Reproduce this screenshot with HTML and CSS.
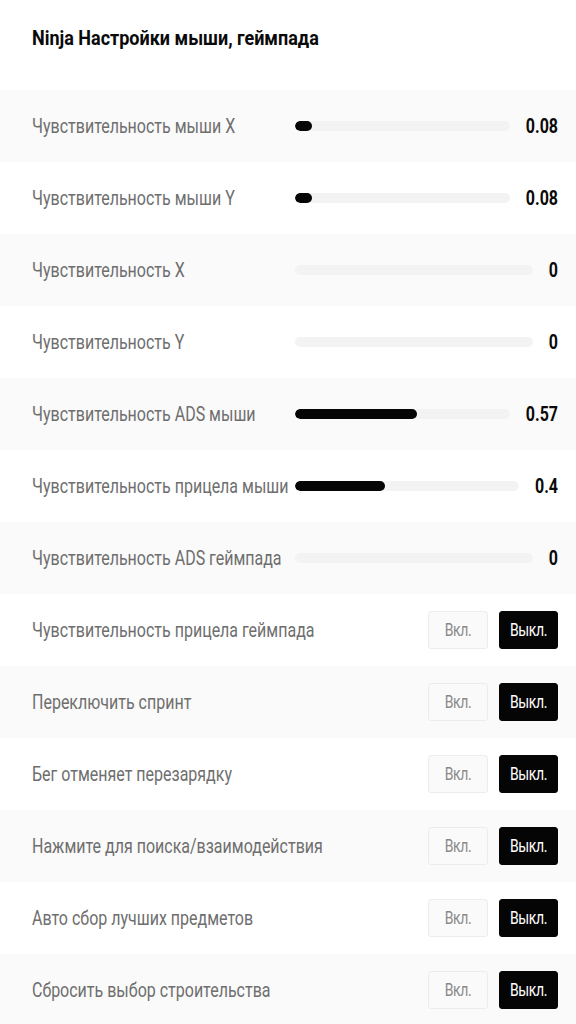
FILE: index.html
```html
<!DOCTYPE html>
<html lang="ru">
<head>
<meta charset="utf-8">
<link rel="stylesheet" href="styles.css">
</head>
<body>
<div class="panel">
  <div class="header"><h1 class="title">Ninja Настройки мыши, геймпада</h1></div>

  <div class="row">
    <span class="label">Чувствительность мыши X</span>
    <div class="slider"><div class="track"><div class="fill" style="width:8%"></div></div><span class="value">0.08</span></div>
  </div>
  <div class="row">
    <span class="label">Чувствительность мыши Y</span>
    <div class="slider"><div class="track"><div class="fill" style="width:8%"></div></div><span class="value">0.08</span></div>
  </div>
  <div class="row">
    <span class="label">Чувствительность X</span>
    <div class="slider"><div class="track"><div class="fill" style="width:0%"></div></div><span class="value">0</span></div>
  </div>
  <div class="row">
    <span class="label">Чувствительность Y</span>
    <div class="slider"><div class="track"><div class="fill" style="width:0%"></div></div><span class="value">0</span></div>
  </div>
  <div class="row">
    <span class="label">Чувствительность ADS мыши</span>
    <div class="slider"><div class="track"><div class="fill" style="width:57%"></div></div><span class="value">0.57</span></div>
  </div>
  <div class="row">
    <span class="label">Чувствительность прицела мыши</span>
    <div class="slider"><div class="track"><div class="fill" style="width:40%"></div></div><span class="value">0.4</span></div>
  </div>
  <div class="row">
    <span class="label">Чувствительность ADS геймпада</span>
    <div class="slider"><div class="track"><div class="fill" style="width:0%"></div></div><span class="value">0</span></div>
  </div>

  <div class="row toggle-row">
    <span class="label">Чувствительность прицела геймпада</span>
    <div class="toggle"><button class="btn btn-on"><span class="btn-text">Вкл.</span></button><button class="btn btn-off"><span class="btn-text">Выкл.</span></button></div>
  </div>
  <div class="row toggle-row">
    <span class="label">Переключить спринт</span>
    <div class="toggle"><button class="btn btn-on"><span class="btn-text">Вкл.</span></button><button class="btn btn-off"><span class="btn-text">Выкл.</span></button></div>
  </div>
  <div class="row toggle-row">
    <span class="label">Бег отменяет перезарядку</span>
    <div class="toggle"><button class="btn btn-on"><span class="btn-text">Вкл.</span></button><button class="btn btn-off"><span class="btn-text">Выкл.</span></button></div>
  </div>
  <div class="row toggle-row">
    <span class="label">Нажмите для поиска/взаимодействия</span>
    <div class="toggle"><button class="btn btn-on"><span class="btn-text">Вкл.</span></button><button class="btn btn-off"><span class="btn-text">Выкл.</span></button></div>
  </div>
  <div class="row toggle-row">
    <span class="label">Авто сбор лучших предметов</span>
    <div class="toggle"><button class="btn btn-on"><span class="btn-text">Вкл.</span></button><button class="btn btn-off"><span class="btn-text">Выкл.</span></button></div>
  </div>
  <div class="row toggle-row">
    <span class="label">Сбросить выбор строительства</span>
    <div class="toggle"><button class="btn btn-on"><span class="btn-text">Вкл.</span></button><button class="btn btn-off"><span class="btn-text">Выкл.</span></button></div>
  </div>
</div>
</body>
</html>
```

FILE: styles.css
```css
html, body {
  margin: 0;
  padding: 0;
  background: #ffffff;
}
body {
  font-family: Roboto, "Noto Sans", "Liberation Sans", sans-serif;
  color: #111;
}
.panel {
  display: flex;
  flex-direction: column;
}
.header {
  height: 90px;
  padding: 0 32px;
  box-sizing: border-box;
  display: flex;
  align-items: flex-start;
}
.title {
  margin: 27px 0 0;
  font-size: 18px;
  font-weight: 700;
  color: #0a0a0a;
  line-height: 24px;
  display: inline-block;
  transform: scaleY(1.08);
}
.row {
  height: 72px;
  box-sizing: border-box;
  padding: 0 18px 0 32px;
  display: grid;
  grid-template-columns: 263px 1fr;
  align-items: center;
}
.row:nth-of-type(even) {
  background: #fafafa;
}
.label {
  font-size: 16px;
  color: #6e6e6e;
  white-space: nowrap;
  justify-self: start;
  display: inline-block;
  transform: scaleY(1.25);
}
.slider {
  display: flex;
  align-items: center;
  gap: 16px;
}
.track {
  flex: 1;
  height: 10px;
  border-radius: 5px;
  background: #f3f3f3;
  overflow: hidden;
}
.fill {
  height: 100%;
  background: #050505;
  border-radius: 5px;
}
.value {
  font-size: 16px;
  font-weight: 700;
  color: #0a0a0a;
  display: inline-block;
  transform: scaleY(1.25);
}
.toggle-row {
  grid-template-columns: 1fr auto;
}
.toggle {
  display: flex;
  gap: 11px;
}
.btn {
  width: 60px;
  height: 38px;
  border-radius: 3px;
  font-family: Roboto, "Noto Sans", sans-serif;
  font-size: 14px;
  letter-spacing: -0.4px;
  padding: 0;
  cursor: pointer;
}
.btn-text {
  display: inline-block;
  transform: scaleY(1.25);
}
.btn-on {
  background: #fafafa;
  border: 1px solid #ececec;
  color: #8a8a8a;
}
.btn-off {
  background: #050505;
  border: 1px solid #050505;
  color: #ffffff;
  width: 59px;
}
```
